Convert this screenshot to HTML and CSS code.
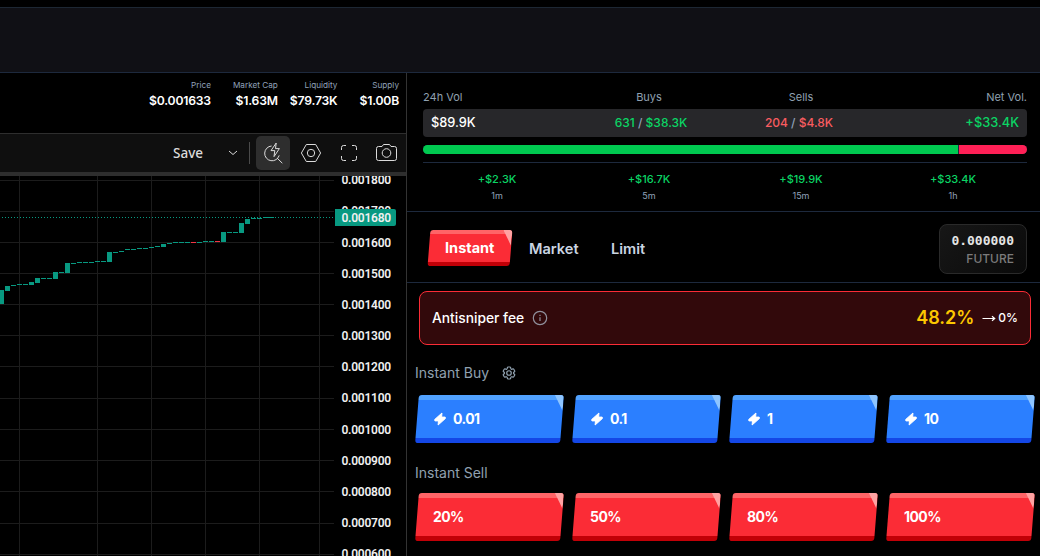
FILE: index.html
```html
<!DOCTYPE html>
<html lang="en">

<head>
    <meta charset="utf-8">
    <title>Trade</title>
    <link rel="stylesheet" href="styles.css">
</head>

<body>
    <header class="topbar"></header>
    <main class="layout">
        <section class="left">
            <ul class="summary">
                <li class="price"><span>Price</span><b>$0.001633</b></li>
                <li class="mcap"><span>Market Cap</span><b>$1.63M</b></li>
                <li class="liq"><span>Liquidity</span><b>$79.73K</b></li>
                <li class="supply"><span>Supply</span><b>$1.00B</b></li>
            </ul>
            <div class="toolbar">
                <span class="save">Save</span>
                <svg class="chevron" width="10" height="6" viewBox="0 0 10 6"><path d="M1 1l4 3.5L9 1" /></svg>
                <i class="sep"></i>
                <span class="tool active">
                    <svg width="28" height="28" viewBox="0 0 28 28"><path d="M12.6 7a7.4 7.4 0 1 0 7.6 9.4M18 19l5.3 5.2M17.2 4l-5.2 7.6h3.8l-.8 6 5.4-8h-3.9z" /></svg>
                </span>
                <span class="tool">
                    <svg width="28" height="28" viewBox="0 0 28 28"><path d="M9.3 5.5h9.4l4.9 8.5-4.9 8.5H9.3L4.4 14z" /><circle cx="14" cy="14" r="3.7" /></svg>
                </span>
                <span class="tool">
                    <svg width="28" height="28" viewBox="0 0 28 28"><path d="M6.5 11V8.5a2 2 0 0 1 2-2H11M17 6.5h2.5a2 2 0 0 1 2 2V11M21.5 17v2.5a2 2 0 0 1-2 2H17M11 21.5H8.5a2 2 0 0 1-2-2V17" /></svg>
                </span>
                <span class="tool">
                    <svg width="28" height="28" viewBox="0 0 28 28"><path d="M5.5 7.5H9l1.5-2h6l1.5 2h3.5a2 2 0 0 1 2 2v10a2 2 0 0 1-2 2h-16a2 2 0 0 1-2-2v-10a2 2 0 0 1 2-2z" /><circle cx="13.5" cy="14" r="4.3" /></svg>
                </span>
            </div>
            <svg class="chart" width="406" height="380" viewBox="0 176 406 380">
                <path class="grid" d="M19.5 176v380M97.5 176v380M151.5 176v380M205.5 176v380M259.5 176v380M319.5 176v380M0 180.5h334M0 211.5h334M0 242.5h334M0 273.5h334M0 304.5h334M0 335.5h334M0 366.5h334M0 398.5h334M0 429.5h334M0 460.5h334M0 491.5h334M0 523.5h334M0 554.5h334" />
                <path class="last" d="M2 217.5h332" />
                <path class="up" d="M0 290h4v14h-4zM5 286h5v5h-5zM11 285h5v1h-5zM17 284h5v1h-5zM23 284h5v1h-5zM29 282h5v3h-5zM35 278h5v5h-5zM41 278h5v1h-5zM47 278h5v1h-5zM53 272h5v7h-5zM59 272h5v1h-5zM65 263h5v10h-5zM71 263h5v1h-5zM77 262h5v1h-5zM83 262h5v1h-5zM89 262h5v1h-5zM95 261h5v1h-5zM101 261h5v1h-5zM107 252h5v10h-5zM113 252h5v1h-5zM119 251h5v1h-5zM125 249h5v1h-5zM131 249h5v1h-5zM137 248h5v1h-5zM143 248h5v1h-5zM149 247h5v1h-5zM155 246h5v1h-5zM161 244h5v3h-5zM167 243h5v1h-5zM173 242h5v1h-5zM179 242h5v1h-5zM185 242h5v1h-5zM197 242h5v1h-5zM203 241h5v1h-5zM209 241h5v1h-5zM221 232h5v10h-5zM227 232h5v1h-5zM233 232h5v1h-5zM239 223h5v10h-5zM245 219h5v5h-5zM251 218h5v1h-5zM257 218h5v1h-5zM263 217h11v1h-11z" />
                <path class="down" d="M191 242h5v1h-5zM215 241h5v1h-5z" />
                <g class="scale">
                    <text x="341.5" y="184">0.001800</text>
                    <text x="341.5" y="215">0.001700</text>
                    <text x="341.5" y="247">0.001600</text>
                    <text x="341.5" y="278">0.001500</text>
                    <text x="341.5" y="309">0.001400</text>
                    <text x="341.5" y="340">0.001300</text>
                    <text x="341.5" y="371">0.001200</text>
                    <text x="341.5" y="402">0.001100</text>
                    <text x="341.5" y="434">0.001000</text>
                    <text x="341.5" y="465">0.000900</text>
                    <text x="341.5" y="496">0.000800</text>
                    <text x="341.5" y="527">0.000700</text>
                    <text x="341.5" y="558">0.000600</text>
                    <path class="tag" d="M335 209h59a2 2 0 0 1 2 2v13a2 2 0 0 1-2 2h-59z" />
                    <text x="341.5" y="222">0.001680</text>
                </g>
            </svg>
        </section>

        <section class="right">
            <div class="volume">
                <div class="row heads"><span>24h Vol</span><span>Buys</span><span>Sells</span><span>Net Vol.</span></div>
                <div class="row totals">
                    <b>$89.9K</b>
                    <span class="green">631 <i>/</i> $38.3K</span>
                    <span class="red">204 <i>/</i> $4.8K</span>
                    <b class="green">+$33.4K</b>
                </div>
                <div class="ratio"><i class="buys"></i><i class="sells"></i></div>
                <div class="row periods">
                    <div><b>+$2.3K</b><span>1m</span></div>
                    <div><b>+$16.7K</b><span>5m</span></div>
                    <div><b>+$19.9K</b><span>15m</span></div>
                    <div><b>+$33.4K</b><span>1h</span></div>
                </div>
            </div>

            <div class="tabs">
                <button class="slab tab-instant"><span>Instant</span></button>
                <span class="tab market">Market</span>
                <span class="tab limit">Limit</span>
                <div class="balance"><b>0.000000</b><span>FUTURE</span></div>
            </div>

            <div class="fee">
                <span class="fee-name">Antisniper fee</span>
                <svg class="info" width="16" height="16" viewBox="0 0 16 16"><circle cx="8" cy="8" r="6.7" /><path d="M8 7.3v3.7M8 4.8v1.3" /></svg>
                <b>48.2%</b>
                <svg class="arrow" width="14" height="8" viewBox="0 0 14 8"><path d="M.5 4.5h12M10 2.3l2.7 2.2L10 6.7" /></svg>
                <span class="fee-end">0%</span>
            </div>

            <h3>Instant Buy
                <svg width="16" height="16" viewBox="0 0 24 24"><path d="M9.59 3.94c.09-.54.56-.94 1.11-.94h2.6c.55 0 1.02.4 1.11.94l.21 1.28c.06.38.31.69.65.87.07.04.15.09.22.13.32.2.72.26 1.08.12l1.21-.45a1.13 1.13 0 0 1 1.37.49l1.3 2.25c.27.47.16 1.08-.26 1.43l-1 .82c-.3.25-.45.63-.44 1v.26c-.01.37.14.75.44 1l1 .82c.42.35.53.96.26 1.43l-1.3 2.25a1.13 1.13 0 0 1-1.37.49l-1.21-.45c-.36-.14-.76-.08-1.08.12l-.22.13c-.34.18-.59.49-.65.87l-.21 1.28c-.09.54-.56.94-1.11.94h-2.6c-.55 0-1.02-.4-1.11-.94l-.21-1.28c-.06-.38-.31-.69-.65-.87l-.22-.13c-.32-.2-.72-.26-1.08-.12l-1.21.45a1.13 1.13 0 0 1-1.37-.49l-1.3-2.25a1.13 1.13 0 0 1 .26-1.43l1-.82c.3-.25.45-.63.44-1v-.26c.01-.37-.14-.75-.44-1l-1-.82a1.13 1.13 0 0 1-.26-1.43l1.3-2.25a1.13 1.13 0 0 1 1.37-.49l1.21.45c.36.14.76.08 1.08-.12l.22-.13c.34-.18.59-.49.65-.87z" /><circle cx="12" cy="12" r="3.4" /></svg>
            </h3>
            <div class="buttons">
                <button class="slab blue"><span><svg width="14" height="14" viewBox="0 0 14 14"><path d="M8.9 1 1.6 7.6l.3 1.3h3.5L5.1 13l7.3-6.6-.3-1.3H8.6z" /></svg>0.01</span></button>
                <button class="slab blue"><span><svg width="14" height="14" viewBox="0 0 14 14"><path d="M8.9 1 1.6 7.6l.3 1.3h3.5L5.1 13l7.3-6.6-.3-1.3H8.6z" /></svg>0.1</span></button>
                <button class="slab blue"><span><svg width="14" height="14" viewBox="0 0 14 14"><path d="M8.9 1 1.6 7.6l.3 1.3h3.5L5.1 13l7.3-6.6-.3-1.3H8.6z" /></svg>1</span></button>
                <button class="slab blue"><span><svg width="14" height="14" viewBox="0 0 14 14"><path d="M8.9 1 1.6 7.6l.3 1.3h3.5L5.1 13l7.3-6.6-.3-1.3H8.6z" /></svg>10</span></button>
            </div>

            <h3 class="sell-title">Instant Sell</h3>
            <div class="buttons">
                <button class="slab"><span>20%</span></button>
                <button class="slab"><span>50%</span></button>
                <button class="slab"><span>80%</span></button>
                <button class="slab"><span>100%</span></button>
            </div>
        </section>
    </main>
</body>

</html>
```
FILE: styles.css
```css
* {
    box-sizing: border-box;
}

body {
    margin: 0;
    height: 556px;
    overflow: hidden;
    background: #000;
    color: #fff;
    font-family: Inter, "Liberation Sans", sans-serif;
}

ul,
h3 {
    margin: 0;
    padding: 0;
    list-style: none;
}

svg {
    display: block;
    flex: none;
    fill: none;
    stroke: currentColor;
}

.topbar {
    height: 66px;
    margin-top: 7px;
    background: #101015;
    border-top: 1px solid #1d2733;
    border-bottom: 1px solid #1d293d;
}

.layout {
    display: flex;
    height: 483px;
}

.left {
    width: 407px;
    flex: none;
    border-right: 1px solid #333;
}

.summary {
    display: flex;
    height: 61px;
    padding: 7px 7px 0 0;
    justify-content: flex-end;
    border-bottom: 1px solid #2e2e2e;
    text-align: right;
    white-space: nowrap;
}

.summary span {
    display: block;
    font-size: 8.2px;
    line-height: 11px;
    color: #90a1b9;
}

.summary b {
    display: block;
    font-size: 12.2px;
    line-height: 19px;
    font-weight: 600;
    letter-spacing: -0.2px;
}

.mcap {
    margin-left: 22px;
}

.liq {
    margin-left: 12px;
}

.supply {
    margin-left: 22px;
}

.toolbar {
    display: flex;
    align-items: center;
    height: 42px;
    padding-left: 173px;
    background: #0f0f0f;
    border-bottom: 4px solid #2e2e2e;
    color: #dbdbdb;
}

.save {
    width: 55px;
    font: 500 13.5px "Noto Sans", sans-serif;
}

.sep {
    width: 1px;
    height: 22px;
    margin: 0 6px 0 11px;
    background: #4a4a4a;
}

.tool {
    display: flex;
    align-items: center;
    justify-content: center;
    width: 34px;
    height: 34px;
    margin-right: 4px;
    border-radius: 5px;
}

.tool:last-child {
    margin-right: 0;
}

.active {
    background: #2e2e2e;
}

.grid {
    stroke: #1c1c1c;
}

.last {
    stroke: #089981;
    stroke-dasharray: 1 2;
}

.up,
.tag {
    fill: #089981;
    stroke: none;
}

.down {
    fill: #f23645;
    stroke: none;
}

.scale text {
    fill: #f0f0f0;
    stroke: none;
    font: 600 12px Roboto, sans-serif;
    letter-spacing: -0.25px;
}

.right {
    flex: 1;
    min-width: 0;
}

.volume {
    height: 139px;
    padding: 17px 13px 0 16px;
    border-bottom: 1px solid #1d293d;
}

.row {
    display: grid;
    grid-template-columns: repeat(4, 1fr);
    gap: 4px;
    align-items: center;
    text-align: center;
}

.heads {
    height: 13px;
    font-size: 11px;
    color: #90a1b0;
}

.heads :first-child,
.totals :first-child {
    text-align: left;
}

.heads :last-child,
.totals :last-child {
    text-align: right;
}

.totals {
    height: 28px;
    margin-top: 6px;
    padding: 0 8px 2px;
    background: #27272a;
    border-radius: 4px;
    font-size: 12px;
    font-weight: 500;
}

.totals b {
    font-size: 12.8px;
    font-weight: 500;
}

.totals i {
    font-style: normal;
    color: #90a1b9;
}

.totals .green,
.periods b {
    color: #0bd464;
}

.totals .red {
    color: #f85c60;
}

.ratio {
    display: flex;
    gap: 1px;
    height: 9px;
    margin: 8px 0;
    border-radius: 5px;
    overflow: hidden;
    background: #1d293d;
}

.buys {
    width: 535px;
    background: #00c950;
}

.sells {
    flex: 1;
    background: #ff2056;
}

.periods {
    padding-top: 8px;
    border-top: 1px solid #1d293d;
}

.periods b {
    display: block;
    font-size: 11px;
    line-height: 16px;
    font-weight: 500;
}

.periods span {
    display: block;
    font-size: 9px;
    line-height: 18px;
    color: #90a1b9;
}

.tabs {
    display: flex;
    align-items: center;
    height: 71px;
    padding: 2px 13px 0 22px;
    border-bottom: 1px solid #1d293d;
}

/* slanted button: light strip on top, dark strip below, glint in the corner */
.slab {
    position: relative;
    width: 145px;
    height: 48px;
    flex: none;
    padding: 0 0 2px 16px;
    border: 0;
    border-radius: 3px;
    overflow: hidden;
    transform: skewX(-4.5deg);
    background: linear-gradient(#ff6467 5px, #fb2c36 5px 43px, #c10007 43px);
    color: #fff;
    font: 700 14px Inter, sans-serif;
    letter-spacing: -0.6px;
    text-align: left;
}

.slab::after {
    content: "";
    position: absolute;
    top: 0;
    right: 0;
    width: 9px;
    height: 16px;
    background: #ffa2a2;
    clip-path: polygon(0 0, 100% 0, 100% 100%);
}

.slab span {
    display: flex;
    align-items: center;
    gap: 6px;
    transform: skewX(4.5deg);
}

.slab svg {
    fill: #fff;
    stroke-width: 1;
    stroke-linejoin: round;
}

.blue {
    background: linear-gradient(#51a2ff 5px, #2b7fff 5px 43px, #1447e6 43px);
}

.blue::after {
    background: #8ec5ff;
}

.tab-instant {
    width: 82px;
    height: 36px;
    padding-bottom: 1px;
    background: linear-gradient(#ff6467 4px, #fb2c36 4px 32px, #c10007 32px);
    font-size: 14.5px;
    letter-spacing: 0;
}

.tab {
    padding-top: 2px;
    font: 600 14.6px Inter, sans-serif;
    color: #cad5e2;
}

.market {
    margin-left: 18px;
    width: 82px;
}

.balance {
    width: 88px;
    height: 50px;
    margin: 2px 0 0 auto;
    padding: 8px 12px 0 0;
    border: 1px solid #2a2a2a;
    border-radius: 8px;
    background: linear-gradient(135deg, #171717, #0a0a0a);
    text-align: right;
}

.balance b {
    display: block;
    font: bold 13px/16px "DejaVu Sans Mono", monospace;
    color: #e5e5e5;
}

.balance span {
    display: block;
    font-size: 12px;
    line-height: 20px;
    font-weight: 500;
    color: #7b7b7b;
}

.fee {
    display: flex;
    align-items: center;
    height: 54px;
    margin: 8px 9px 0 12px;
    padding: 0 12px 1px;
    border: 1px solid #fb2c36;
    border-radius: 8px;
    background: #32090b;
}

.fee-name {
    font-size: 13.8px;
    font-weight: 500;
}

.info {
    margin-left: 8px;
    color: #90909c;
    stroke-width: 1.2;
}

.fee b {
    margin-left: auto;
    font-size: 18px;
    font-weight: 600;
    color: #fdc700;
}

.arrow {
    margin: 0 2px 0 8px;
    stroke-width: 1.2;
}

.fee-end {
    font-size: 12px;
    font-weight: 500;
}

h3 {
    display: flex;
    align-items: center;
    gap: 12px;
    height: 18px;
    margin: 18px 0 14px 8px;
    font-size: 14px;
    font-weight: 400;
    color: #90a1b0;
}

h3 svg {
    margin-top: 2px;
    stroke-width: 1.8;
}

.buttons {
    display: flex;
    gap: 12px;
    padding-left: 10px;
}

.sell-title {
    margin: 20px 0 12px 8px;
}
```
